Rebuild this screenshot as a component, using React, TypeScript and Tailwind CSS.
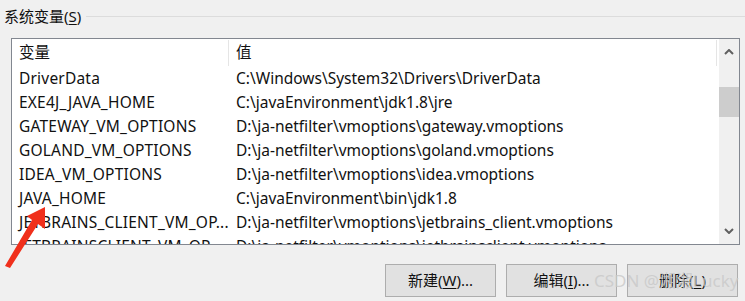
const rows: [string, string][] = [
  ["DriverData", "C:\\Windows\\System32\\Drivers\\DriverData"],
  ["EXE4J_JAVA_HOME", "C:\\javaEnvironment\\jdk1.8\\jre"],
  ["GATEWAY_VM_OPTIONS", "D:\\ja-netfilter\\vmoptions\\gateway.vmoptions"],
  ["GOLAND_VM_OPTIONS", "D:\\ja-netfilter\\vmoptions\\goland.vmoptions"],
  ["IDEA_VM_OPTIONS", "D:\\ja-netfilter\\vmoptions\\idea.vmoptions"],
  ["JAVA_HOME", "C:\\javaEnvironment\\bin\\jdk1.8"],
  ["JETBRAINS_CLIENT_VM_OP...", "D:\\ja-netfilter\\vmoptions\\jetbrains_client.vmoptions"],
  ["JETBRAINSCLIENT_VM_OP...", "D:\\ja-netfilter\\vmoptions\\jetbrainsclient.vmoptions"],
];

const font = { fontFamily: '"Noto Sans", "Noto Sans CJK SC", sans-serif' };

const Button = ({ label, hot, suffix }: { label: string; hot: string; suffix: string }) => (
  <button className="w-[111px] h-[33px] bg-[#e1e1e1] border border-[#adadad] text-[15px] text-[#111] flex items-center justify-center">
    {label}(<span className="underline underline-offset-2">{hot}</span>){suffix}
  </button>
);

export default function App() {
  return (
    <div
      className="relative w-[745px] h-[301px] bg-[#f0f0f0] overflow-hidden text-[#111]"
      style={font}
    >
      {/* group title */}
      <div className="flex items-center h-[22px] mt-[5px] pl-[4px]">
        <span className="text-[15px] leading-none">
          系统变量(<span className="underline underline-offset-2">S</span>)
        </span>
        <div className="flex-1 h-px bg-[#dcdcdc] ml-[5px]" />
      </div>

      {/* list box */}
      <div className="ml-[11px] mt-[11px] w-[729px] h-[207px] border border-[#828790] bg-white flex">
        <div className="flex-1 overflow-hidden text-[15.5px]">
          <div className="flex h-[28px] items-center">
            <div className="w-[217px] pl-[7px] border-r border-[#e5e5e5] h-[26px] flex items-center">变量</div>
            <div className="flex-1 pl-[7px] border-r border-[#e5e5e5] h-[26px] mr-[2px] flex items-center">值</div>
          </div>
          {rows.map(([name, value]) => (
            <div key={name} className="flex h-[24px] items-center whitespace-nowrap">
              <div className="w-[217px] pl-[7px] overflow-hidden tracking-[0.2px]">{name}</div>
              <div className="flex-1 pl-[7px] overflow-hidden">{value}</div>
            </div>
          ))}
        </div>
        {/* scrollbar */}
        <div className="w-[20px] bg-[#f0f0f0] flex flex-col items-center">
          <div className="h-[24px] w-full flex items-center justify-center mt-[1px]">
            <svg width="10" height="6" viewBox="0 0 10 6">
              <path d="M1 5 L5 1 L9 5" fill="none" stroke="#606060" strokeWidth="2" />
            </svg>
          </div>
          <div className="w-full h-[30px] bg-[#cdcdcd] mt-[23px]" />
          <div className="flex-1" />
          <div className="h-[24px] w-full flex items-center justify-center mb-[1px]">
            <svg width="10" height="6" viewBox="0 0 10 6">
              <path d="M1 1 L5 5 L9 1" fill="none" stroke="#606060" strokeWidth="2" />
            </svg>
          </div>
        </div>
      </div>

      {/* buttons */}
      <div className="flex justify-end gap-[10px] mt-[19px] pr-[7px]">
        <Button label="新建" hot="W" suffix="..." />
        <Button label="编辑" hot="I" suffix="..." />
        <Button label="删除" hot="L" suffix="" />
      </div>

      {/* watermark */}
      <div className="absolute left-[594px] top-[268px] text-[17px] text-[#c8c8c8]/80 whitespace-nowrap pointer-events-none">
        CSDN @湘湘Lucky
      </div>

      {/* red arrow annotation */}
      <svg className="absolute left-0 top-[200px]" width="60" height="75" viewBox="0 0 60 75">
        <polygon points="45,7 45,29 38,24 10,68 5,66 32,20 27,16" fill="#f0301c" />
      </svg>
    </div>
  );
}
